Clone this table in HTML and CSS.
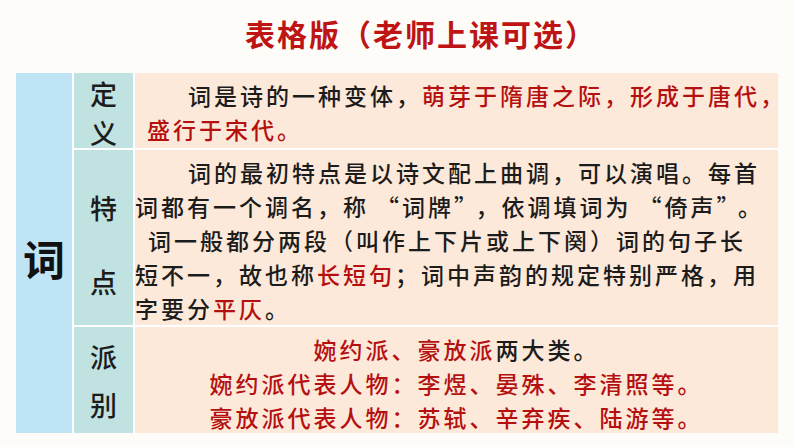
FILE: index.html
```html
<!DOCTYPE html>
<html lang="zh-CN">
<head>
<meta charset="utf-8">
<title>表格版</title>
<link rel="stylesheet" href="styles.css">
</head>
<body>
<div class="slide">
  <h1 class="title">表格版（老师上课可选）</h1>
  <div class="table">
    <div class="head">词</div>

    <div class="label label-def"><span>定</span><span>义</span></div>
    <div class="cell cell-def">
      <p class="text"><span class="indent-def"></span>词是诗的一种变体，<span class="red">萌芽于隋唐之际，形成于唐代，</span><br><span class="red">盛行于宋代。</span></p>
    </div>

    <div class="label label-feat"><span>特</span><span>点</span></div>
    <div class="cell cell-feat">
      <p class="text"><span class="indent-feat"></span>词的最初特点是以诗文配上曲调，可以演唱。每首<br>词都有一个调名，称<span class="ql">“</span>词牌<span class="qr">”</span>，依调填词为<span class="ql">“</span>倚声<span class="qr">”</span>。<br><span class="indent-half"></span>词一般都分两段（叫作上下片或上下阕）词的句子长<br>短不一，故也称<span class="red">长短句</span>；词中声韵的规定特别严格，用<br>字要分<span class="red">平仄</span>。</p>
    </div>

    <div class="label label-school"><span>派</span><span>别</span></div>
    <div class="cell cell-school">
      <p class="text center"><span class="red">婉约派、豪放派</span>两大类。<br><span class="red">婉约派代表人物：李煜、晏殊、李清照等。</span><br><span class="red">豪放派代表人物：苏轼、辛弃疾、陆游等。</span></p>
    </div>
  </div>
</div>
</body>
</html>
```

FILE: styles.css
```css
html, body {
  margin: 0;
  padding: 0;
  background: #fdfcf8;
}

body {
  font-family: "Noto Sans CJK SC", "Noto Sans", sans-serif;
  color: #1c1c1c;
}

.slide {
  width: 794px;
  height: 447px;
  overflow: hidden;
  padding-top: 13px;
  box-sizing: border-box;
}

.title {
  margin: 0;
  padding-left: 48px;
  height: 40px;
  line-height: 40px;
  font-size: 30px;
  font-weight: 700;
  color: #be1414;
  text-align: center;
  letter-spacing: 2px;
}

.table {
  margin: 20px 0 0 16px;
  display: grid;
  grid-template-columns: 56px 59px 643px;
  grid-template-rows: 75px 175px 106px;
  gap: 2px;
  background: #ffffff;
  width: 762px;
}

.head {
  grid-row: 1 / 4;
  grid-column: 1;
  background: #bee4f6;
  display: flex;
  align-items: center;
  justify-content: center;
  padding-top: 8px;
  font-size: 42px;
  font-weight: 700;
  color: #111;
}

.label {
  background: #c0e2e0;
  display: flex;
  flex-direction: column;
  align-items: center;
  justify-content: center;
  font-size: 27px;
  line-height: 36px;
  font-weight: 500;
  color: #1c1c1c;
  padding-top: 6px;
  box-sizing: border-box;
}

.label-def { gap: 3px; }
.label-feat { gap: 38px; padding-top: 14px; }
.label-school { gap: 12px; padding-top: 2px; }

.cell {
  background: #fde9da;
  padding-top: 5px;
  box-sizing: border-box;
}

.cell-def { padding-left: 12px; }
.cell-feat { padding-left: 0; }
.cell-school { padding-left: 0; }

.text {
  margin: 0;
  font-size: 23px;
  line-height: 34px;
  letter-spacing: 3px;
  font-weight: 500;
  white-space: nowrap;
}

.center { text-align: center; }

.red { color: #b51010; }

.ql { padding-left: 7px; }
.qr { padding-right: 7px; }

.indent-def { display: inline-block; width: 41px; }
.indent-feat { display: inline-block; width: 53px; }
.indent-half { display: inline-block; width: 13px; }
```
